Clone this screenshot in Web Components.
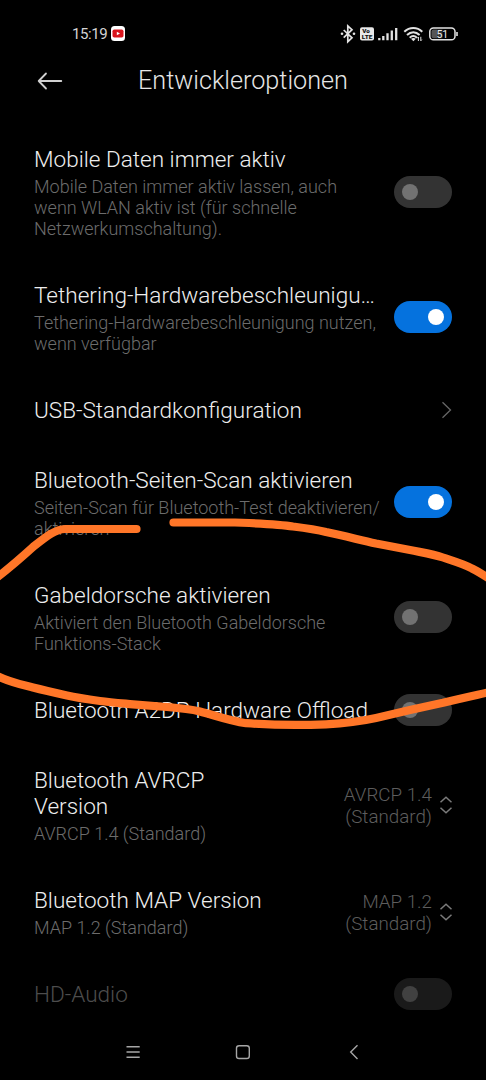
<!DOCTYPE html>
<html lang="de">
<head>
<meta charset="utf-8">
<title>Entwickleroptionen</title>
<style>
html, body { margin: 0; background: #000; }
body { width: 486px; height: 1080px; overflow: hidden; font-family: Roboto, "Liberation Sans", sans-serif; font-weight: 300; color: #eee; }
</style>
</head>
<body>
<settings-screen></settings-screen>
<script>
function define(name, html) {
  customElements.define(name, class extends HTMLElement {
    connectedCallback() {
      if (this.shadowRoot) return;
      const t = document.createElement('template');
      t.innerHTML = html;
      this.attachShadow({ mode: 'open' }).appendChild(t.content.cloneNode(true));
    }
  });
}

define('status-bar', `
<style>
:host { display: flex; height: 55px; box-sizing: border-box; padding: 12px 27px 0 72px; align-items: center; justify-content: space-between; color: #ddd; }
.side { display: flex; align-items: center; }
.time { font-size: 15px; line-height: 18px; font-weight: 400; margin-right: 4px; color: #d4d4d4; letter-spacing: -.4px; width: 35px; }
svg { display: block; }
</style>
<div class="side"><span class="time">15:19</span>
<svg width="14" height="15" viewBox="0 0 14 15"><rect width="14" height="15" rx="3.5" fill="#fff"/><rect x="1.5" y="3.5" width="11" height="8" rx="1.8" fill="#d9141c"/><path d="M5.8 5.7v3.6L9 7.5z" fill="#fff"/></svg></div>
<div class="side">
<svg width="119" height="20" viewBox="340 24 119 20" fill="none" stroke="#e2e2e2">
<path d="M343.7 30l8.3 7.8-4.2 3.9V26l4.2 3.7-8.3 7.9" stroke-width="1.7"/><circle cx="342" cy="33.8" r="1.3" fill="#e2e2e2" stroke="none"/><circle cx="354" cy="33.8" r="1.3" fill="#e2e2e2" stroke="none"/>
<rect x="360" y="27.3" width="14" height="13.2" rx="2" fill="#e8e8e8" stroke="none"/>
<text x="362.2" y="32.9" font-size="5.4" font-weight="900" fill="#111" stroke="none" font-family="Roboto, sans-serif" textLength="7.6" lengthAdjust="spacingAndGlyphs">Vo</text>
<text x="361.8" y="39.4" font-size="5.4" font-weight="900" fill="#111" stroke="none" font-family="Roboto, sans-serif" textLength="10.6" lengthAdjust="spacingAndGlyphs">LTE</text>
<path d="M379.3 40.3V38M383.3 40.3V36M387.5 40.3v-7M391.8 40.3V30.5M396.2 40.3V28" stroke-width="2.3"/>
<path d="M404.3 31.8c5.3-5 12.7-5 18 0M407 34.9c3.8-3.4 8.8-3.4 12.6 0M409.7 37.7c2.2-2 5-2 7.2 0" stroke-width="2"/><path d="M411 38.8q2.4-1.7 4.8 0l-2.4 2.4z" fill="#e2e2e2" stroke="none"/>
<path d="M418.4 41v-4l-1 1.2M420.8 36.8v4l1-1.2" stroke-width="1"/>
<rect x="429.8" y="28" width="25.2" height="11.8" rx="3.6" stroke-width="1.5"/>
<path d="M431.5 31.5q0-2 2-2H437v8.8h-3.5q-2 0-2-2z" fill="#555" stroke="none"/>
<path d="M437 29.5h5.5v8.8H437z" fill="#333" stroke="none"/>
<path d="M457 32v4" stroke-width="1.6"/>
<text x="442.3" y="37.6" text-anchor="middle" font-size="10.5" font-weight="400" fill="#eee" stroke="none" font-family="Roboto, sans-serif">51</text>
</svg></div>`);

define('title-bar', `
<style>
:host { display: grid; grid-template-columns: 26px 1fr 26px; align-items: center; height: 50px; padding: 0 37px; margin-bottom: 20px; }
h1 { margin: 0; padding-top: 2px; font-size: 25.2px; line-height: 30px; font-weight: 300; text-align: center; white-space: nowrap; color: #e6e6e6; }
svg { display: block; }
</style>
<svg width="26" height="20" viewBox="0 0 26 20" fill="none" stroke="#d0d0d0" stroke-width="1.8" stroke-linecap="round" stroke-linejoin="round"><path d="M24.3 11H1.7M9 3.5L1.7 11 9 18.5"/></svg>
<h1><slot></slot></h1>`);

define('toggle-switch', `
<style>
:host { display: flex; box-sizing: border-box; width: 58px; height: 32px; border-radius: 16px; padding: 8px; background: #333; align-items: center; }
i { display: block; width: 16px; height: 16px; border-radius: 50%; background: #727272; }
:host([on]) { background: #0572de; justify-content: flex-end; }
:host([on]) i { background: #fff; }
:host([disabled]) { background: #1a1a1a; }
:host([disabled]) i { background: #414141; }
</style><i></i>`);

define('chevron-right', `
<style>:host { display: block; width: 11px; height: 18px; } svg { display: block; }</style>
<svg width="11" height="18" viewBox="0 0 11 18" fill="none" stroke="#666" stroke-width="1.3"><path d="M1.5 1.2L9.5 9l-8 7.8"/></svg>`);

define('value-picker', `
<style>
:host { display: flex; align-items: center; gap: 7px; color: #5d5d5d; font-size: 18.8px; line-height: 22px; text-align: right; white-space: nowrap; padding-top: 2px; }
svg { display: block; margin-top: -2px; }
</style>
<span><slot></slot></span>
<svg width="13" height="20" viewBox="0 0 13 20" fill="none" stroke="#7b7b7b" stroke-width="1.5"><path d="M1.5 7.2l5.5-5 5.5 5M1.5 12.8l5.5 5 5.5-5"/></svg>`);

define('setting-row', `
<style>
:host { display: flex; box-sizing: border-box; padding: 22px 34px; align-items: center; justify-content: space-between; }
.text { width: 347px; flex: none; }
:host([picker]) .text { width: 240px; }
.title { font-size: 22.55px; line-height: 26px; color: #eee; }
:host([single]) .title { white-space: nowrap; width: 346px; overflow: hidden; text-overflow: ellipsis; }
:host([disabled]) .title { color: #4d4d4d; }
.desc { display: block; font-size: 18px; line-height: 21px; color: #6c6c6c; }
.desc::slotted(*) { display: block; margin-top: 3px; font-size: 18px; line-height: 21px; color: #6c6c6c; }
.control { flex: none; margin: -12px 0 -9px; }
</style>
<div class="text"><div class="title"><slot></slot></div><slot class="desc" name="desc"></slot></div>
<div class="control"><slot name="control"></slot></div>`);

define('nav-bar', `
<style>
:host { display: flex; height: 54px; align-items: center; justify-content: center; }
svg { display: block; }
</style>
<svg width="240" height="20" viewBox="123 1042 240 20" fill="none" stroke="#a6a6a6" stroke-width="1.4"><path d="M126.5 1046.7h13.2M126.5 1052h13.2M126.5 1057.2h13.2"/><rect x="236.5" y="1045.7" width="12.8" height="12.8" rx="2.6"/><path d="M357.5 1045.3l-6.8 6.8 6.8 6.8"/></svg>`);

define('pen-marking', `
<style>:host { position: absolute; left: 0; top: 0; width: 486px; height: 1080px; pointer-events: none; } svg { display: block; }</style>
<svg width="486" height="1080" viewBox="0 0 486 1080" fill="none" stroke="#ff7628" stroke-width="8.2" stroke-linecap="round" stroke-linejoin="round">
<path d="M136.5 529H65C55 529.5 47 536 33 547C22 557 12 566 -5 579"/>
<path d="M173.5 522.5H235C260 523.5 278 524 293 526.5C305 528 316 529.5 326 532C345 536 360 540 376 543.5L410 550C422 552.5 433 554 443 557.5C455 561.5 464 564 472 568.5C480 572.5 486 576.5 492 580.5"/>
<path d="M-6 674C5 681 20 684 33 687.5C45 690.5 56 693 67 695.5C78 698 89 699.5 100 701C111 702.5 122 703.3 133 704.3L167 707C180 708 190 709 200 711.5C215 715.5 230 721 246 723.2C272 725 300 725.3 326 724.3C345 723.3 360 721.5 376 718L410 710L443 702.7C458 699 472 696 492 691.5"/>
</svg>`);

define('settings-screen', `
<style>
:host { display: flex; flex-direction: column; position: relative; width: 486px; height: 1080px; overflow: hidden; background: #000; }
main { height: 900px; overflow: hidden; }
</style>
<status-bar></status-bar>
<title-bar>Entwickleroptionen</title-bar>
<main>
<setting-row>Mobile Daten immer aktiv<span slot="desc">Mobile Daten immer aktiv lassen, auch wenn WLAN aktiv ist (für schnelle Netzwerkumschaltung).</span><toggle-switch slot="control"></toggle-switch></setting-row>
<setting-row single>Tethering-Hardwarebeschleunigu…<span slot="desc">Tethering-Hardwarebeschleunigung nutzen, wenn verfügbar</span><toggle-switch slot="control" on></toggle-switch></setting-row>
<setting-row>USB-Standardkonfiguration<chevron-right slot="control"></chevron-right></setting-row>
<setting-row>Bluetooth-Seiten-Scan aktivieren<span slot="desc">Seiten-Scan für Bluetooth-Test deaktivieren/<br>aktivieren</span><toggle-switch slot="control" on></toggle-switch></setting-row>
<setting-row>Gabeldorsche aktivieren<span slot="desc">Aktiviert den Bluetooth Gabeldorsche Funktions-Stack</span><toggle-switch slot="control"></toggle-switch></setting-row>
<setting-row>Bluetooth A2DP Hardware Offload<toggle-switch slot="control"></toggle-switch></setting-row>
<setting-row picker>Bluetooth AVRCP Version<span slot="desc">AVRCP 1.4 (Standard)</span><value-picker slot="control">AVRCP 1.4<br>(Standard)</value-picker></setting-row>
<setting-row picker>Bluetooth MAP Version<span slot="desc">MAP 1.2 (Standard)</span><value-picker slot="control">MAP 1.2<br>(Standard)</value-picker></setting-row>
<setting-row disabled>HD-Audio<toggle-switch slot="control" disabled></toggle-switch></setting-row>
</main>
<nav-bar></nav-bar>
<pen-marking></pen-marking>`);
</script>
</body>
</html>
